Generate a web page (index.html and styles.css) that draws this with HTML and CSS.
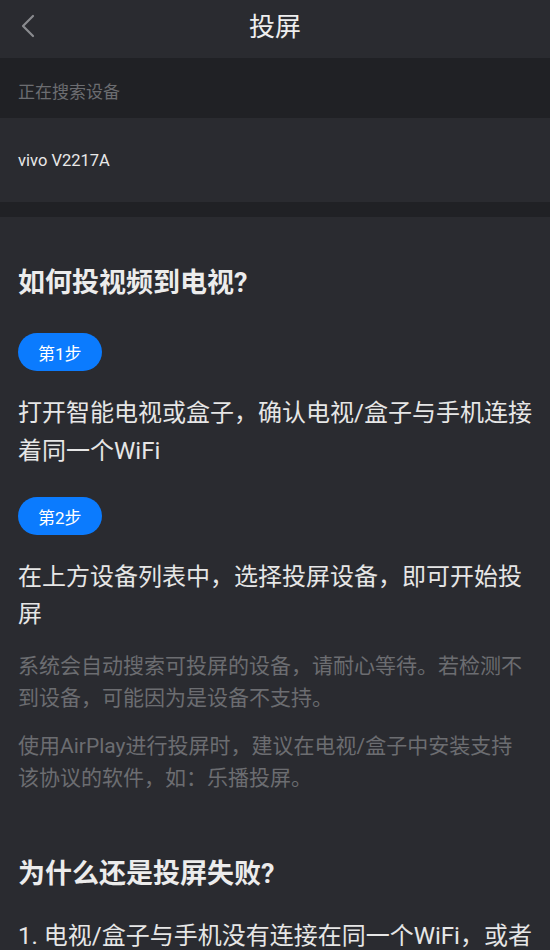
FILE: index.html
```html
<!DOCTYPE html>
<html lang="zh-CN">

<head>
    <meta charset="UTF-8">
    <meta name="viewport" content="width=device-width, initial-scale=1.0">
    <title>投屏</title>
    <link rel="stylesheet" href="styles.css">
</head>

<body>

    <div class="header">
        <button class="back" title="返回">
            <svg width="20" height="24" viewBox="0 0 20 24">
                <polyline points="13,2 3,12 13,22" fill="none" stroke="#8a8b8f" stroke-width="2.2" stroke-linecap="round" stroke-linejoin="round" />
            </svg>
        </button>
        <h1>投屏</h1>
        <div></div>
    </div>

    <div class="status">正在搜索设备</div>
    <div class="device">vivo V2217A</div>
    <div class="divider"></div>

    <div class="guide">
        <h2>如何投视频到电视?</h2>

        <span class="step">第1步</span>
        <p class="main">打开智能电视或盒子，确认电视/盒子与手机连接着同一个WiFi</p>

        <span class="step">第2步</span>
        <p class="main main-2">在上方设备列表中，选择投屏设备，即可开始投屏</p>

        <p class="tip">系统会自动搜索可投屏的设备，请耐心等待。若检测不到设备，可能因为是设备不支持。</p>
        <p class="tip">使用AirPlay进行投屏时，建议在电视/盒子中安装支持该协议的软件，如：乐播投屏。</p>

        <h2 class="why">为什么还是投屏失败?</h2>
        <p class="main reason">1. 电视/盒子与手机没有连接在同一个WiFi，或者WiFi信号不稳定</p>
    </div>

</body>

</html>
```

FILE: styles.css
```css
body {
    margin: 0;
    background: #2a2b30;
    color: #e6e6e6;
    font-family: Roboto, "Noto Sans CJK SC", sans-serif;
    overflow: hidden;
}

.header {
    height: 58px;
    display: grid;
    grid-template-columns: 1fr auto 1fr;
    align-items: center;
}

.back {
    justify-self: start;
    background: none;
    border: none;
    padding: 0;
    margin-left: 20px;
    margin-top: -6px;
    display: flex;
}

.header h1 {
    margin: 0;
    font-size: 26px;
    font-weight: 400;
    color: #eeeeee;
    margin-top: -9px;
}

.status {
    background: #202125;
    height: 60px;
    padding: 5px 18px 0 18px;
    box-sizing: border-box;
    display: flex;
    align-items: center;
    font-size: 17px;
    color: #6c6d71;
}

.device {
    height: 84px;
    padding: 0 18px;
    display: flex;
    align-items: center;
    font-size: 16.5px;
    color: #e8e8e8;
}

.divider {
    height: 15px;
    background: #202125;
}

.guide {
    padding: 48px 18px 0 18px;
    display: flex;
    flex-direction: column;
    align-items: flex-start;
}

h2 {
    margin: 0 0 32px 0;
    font-size: 27px;
    line-height: 36px;
    font-weight: 700;
    color: #ececec;
}

.step {
    height: 38px;
    padding: 0 20px;
    border-radius: 19px;
    background: #0b7bfe;
    color: #ffffff;
    font-size: 17px;
    display: inline-flex;
    align-items: center;
}

.main {
    margin: 23px 0 27px 0;
    font-size: 24px;
    line-height: 38px;
    color: #e6e6e6;
}

.main-2 {
    margin: 24px 0 17px 0;
    line-height: 37px;
}

.tip {
    margin: 0 0 16px 0;
    font-size: 21px;
    line-height: 32px;
    color: #6c6d71;
}

.why {
    margin-top: 46px;
    margin-bottom: 25px;
}

.reason {
    margin: 0;
}
```
